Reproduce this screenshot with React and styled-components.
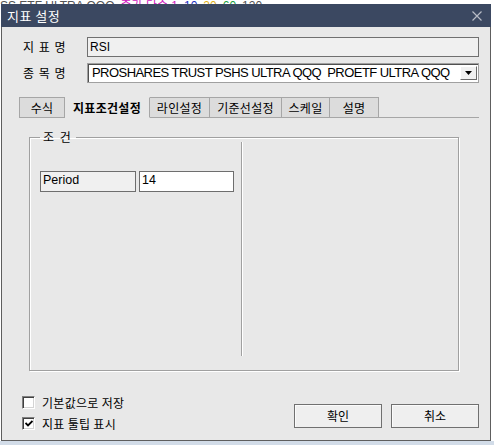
import React from 'react';
import styled, { createGlobalStyle } from 'styled-components';

const Global = createGlobalStyle`
  html, body {
    margin: 0;
    padding: 0;
    background: #ffffff;
    overflow: hidden;
  }
  body {
    font-family: "Noto Sans CJK KR", "Liberation Sans", sans-serif;
    font-size: 12px;
    color: #000;
  }
`

const Page = styled.div`
  width: 494px;
  height: 445px;
  display: flex;
  flex-direction: column;
  background: #fff;
`

const TopStrip = styled.div`
  height: 4px;
  overflow: hidden;
  white-space: nowrap;
  font-family: "Liberation Sans", "Noto Sans CJK KR", sans-serif;
  font-size: 12px;
  line-height: 12px;
  color: #555;
  span {
    display: inline-block;
    margin-top: -9px;
    margin-right: 6px;
  }
`

const Dialog = styled.div`
  margin-left: 1px;
  width: 490px;
  height: 437px;
  box-sizing: border-box;
  border: 1px solid #5e5e5e;
  border-top: none;
  background: #e8e8e8;
  display: flex;
  flex-direction: column;
`

const TitleBar = styled.div`
  height: 23px;
  background: #3b4861;
  display: flex;
  align-items: center;
  justify-content: space-between;
  padding: 0 9px 0 6px;
  margin: 0 -1px;
`

const Title = styled.div`
  color: #fff;
  font-size: 13px;
  line-height: 23px;
  letter-spacing: 0.5px;
`

const Body = styled.div`
  flex: 1;
  display: flex;
  flex-direction: column;
  padding: 10px 11px 0 0;
`

const FieldRow = styled.div`
  display: flex;
  align-items: center;
  height: 20px;
  margin-bottom: 6px;
`

const Label = styled.div`
  flex: none;
  width: 85px;
  box-sizing: border-box;
  padding-left: 21px;
  font-size: 12px;
  line-height: 20px;
  letter-spacing: 1px;
  white-space: nowrap;
`

const TextBox = styled.div`
  flex: 1;
  height: 20px;
  box-sizing: border-box;
  border: 1px solid #707070;
  background: ${p => (p.$white ? '#ffffff' : '#f0f0f0')};
  font-family: "Liberation Sans", sans-serif;
  font-size: 12px;
  line-height: 16px;
  padding-left: 2px;
  display: flex;
  align-items: center;
  justify-content: space-between;
  ${p => p.$white && `
    border-color: #a0a0a0;
    box-shadow: inset 1px 1px 0 #505050;
    padding-left: 4px;
    font-size: 13px;
    letter-spacing: -0.55px;
  `}
`

const ComboText = styled.span`
  white-space: nowrap;
  line-height: 18px;
`

const DropButton = styled.div`
  width: 17px;
  height: 14px;
  margin-right: 1px;
  box-sizing: border-box;
  background: #f0f0f0;
  border: 1px solid;
  border-color: #ffffff #696969 #696969 #ffffff;
  display: flex;
  align-items: center;
  justify-content: center;
`

const Tabs = styled.div`
  display: flex;
  margin: 8px 0 0 17px;
  height: 21px;
`

const Tab = styled.div`
  height: 21px;
  box-sizing: border-box;
  width: ${p => p.$w}px;
  text-align: center;
  font-size: 12px;
  line-height: 19px;
  letter-spacing: 0.3px;
  border: 1px solid #a6a6a6;
  border-left: ${p => (p.$first ? '1px solid #a6a6a6' : 'none')};
  background: ${p => (p.$active ? '#e8e8e8' : '#dcdcdc')};
  font-weight: ${p => (p.$active ? 700 : 400)};
  border-top-color: ${p => (p.$active ? '#e8e8e8' : '#a6a6a6')};
  border-bottom-color: ${p => (p.$active ? '#e8e8e8' : '#a6a6a6')};
  white-space: nowrap;
`

const TabLine = styled.div`
  flex: 1;
  border-bottom: 1px solid #a6a6a6;
`

const Group = styled.fieldset`
  margin: 12px 0 0 27px;
  width: 430px;
  height: 241px;
  box-sizing: border-box;
  border: 1px solid #a0a0a0;
  box-shadow: inset 1px 1px 0 #fff, 1px 1px 0 #fff;
  padding: 0;
  display: flex;
`

const Legend = styled.legend`
  margin-left: 10px;
  padding: 0 5px 0 3px;
  font-size: 12px;
  line-height: 14px;
  word-spacing: 3px;
`

const GroupInner = styled.div`
  flex: 1;
  display: flex;
  margin-top: -2px;
`

const LeftPane = styled.div`
  width: 211px;
  padding: 29px 0 0 10px;
  box-sizing: border-box;
`

const Divider = styled.div`
  width: 1px;
  height: 214px;
  background: #a0a0a0;
  box-shadow: 1px 0 0 #fff;
`

const ParamRow = styled.div`
  display: flex;
  gap: 3px;
`

const ParamCell = styled.div`
  width: ${p => p.$w}px;
  height: 21px;
  box-sizing: border-box;
  border: 1px solid #6e6e6e;
  background: ${p => (p.$value ? '#ffffff' : '#f0f0f0')};
  font-family: "Liberation Sans", sans-serif;
  font-size: 12.5px;
  line-height: 17px;
  padding-left: 2px;
`

const Footer = styled.div`
  flex: 1;
  display: flex;
  justify-content: space-between;
  align-items: flex-start;
  padding: 25px 0 0 20px;
`

const Checks = styled.div`
  display: flex;
  flex-direction: column;
  gap: 8px;
`

const CheckRow = styled.label`
  display: flex;
  align-items: center;
  gap: 7px;
  font-size: 12px;
  line-height: 13px;
  letter-spacing: 0.3px;
`

const Box = styled.span`
  width: 13px;
  height: 13px;
  box-sizing: border-box;
  background: #fff;
  border: 1px solid;
  border-color: #808080 #ffffff #ffffff #808080;
  box-shadow: inset 1px 1px 0 #404040, inset -1px -1px 0 #d4d4d4;
  display: flex;
  align-items: center;
  justify-content: center;
`

const Buttons = styled.div`
  display: flex;
  gap: 9px;
  margin-top: 8px;
`

const Button = styled.div`
  width: 88px;
  height: 24px;
  box-sizing: border-box;
  border: 1px solid #707070;
  background: #efefef;
  box-shadow: inset 1px 1px 0 #fbfbfb;
  text-align: center;
  font-size: 12px;
  line-height: 22px;
`

const BottomStrip = styled.div`
  height: 4px;
  background: #d2dce8;
`

const Close = () => (
  <svg width="10" height="10" viewBox="0 0 10 10">
    <path d="M0.5 0.5 L9.5 9.5 M9.5 0.5 L0.5 9.5" stroke="#b8bcc6" strokeWidth="1.2" />
  </svg>
)

const tabs = [
  { label: '수식', w: 46, first: true },
  { label: '지표조건설정', w: 85, active: true },
  { label: '라인설정', w: 60 },
  { label: '기준선설정', w: 72 },
  { label: '스케일', w: 48 },
  { label: '설명', w: 49 },
]

export default function App() {
  return (
    <Page>
      <Global />
      <TopStrip>
        <span>SS ETF ULTRA QQQ</span>
        <span style={{ color: '#d020c0' }}>종가 단순 1</span>
        <span style={{ color: '#2030c0' }}>10</span>
        <span style={{ color: '#e0b020' }}>20</span>
        <span style={{ color: '#20a040' }}>60</span>
        <span>120</span>
      </TopStrip>
      <Dialog>
        <TitleBar>
          <Title>지표 설정</Title>
          <Close />
        </TitleBar>
        <Body>
          <FieldRow>
            <Label>지 표 명</Label>
            <TextBox>RSI</TextBox>
          </FieldRow>
          <FieldRow>
            <Label>종 목 명</Label>
            <TextBox $white>
              <ComboText>PROSHARES TRUST PSHS ULTRA QQQ&nbsp; PROETF ULTRA QQQ</ComboText>
              <DropButton>
                <svg width="7" height="4" viewBox="0 0 7 4">
                  <path d="M0 0 H7 L3.5 4 Z" fill="#000" />
                </svg>
              </DropButton>
            </TextBox>
          </FieldRow>
          <Tabs>
            {tabs.map(t => (
              <Tab key={t.label} $w={t.w} $first={t.first} $active={t.active}>
                {t.label}
              </Tab>
            ))}
            <TabLine />
          </Tabs>
          <Group>
            <Legend>조 건</Legend>
            <GroupInner>
              <LeftPane>
                <ParamRow>
                  <ParamCell $w={96}>Period</ParamCell>
                  <ParamCell $w={95} $value>14</ParamCell>
                </ParamRow>
              </LeftPane>
              <Divider />
            </GroupInner>
          </Group>
          <Footer>
            <Checks>
              <CheckRow>
                <Box />
                기본값으로 저장
              </CheckRow>
              <CheckRow>
                <Box>
                  <svg width="8" height="7" viewBox="0 0 8 7">
                    <path d="M0.5 3 L3 5.5 L7.5 1" stroke="#000" strokeWidth="1.8" fill="none" />
                  </svg>
                </Box>
                지표 툴팁 표시
              </CheckRow>
            </Checks>
            <Buttons>
              <Button>확인</Button>
              <Button>취소</Button>
            </Buttons>
          </Footer>
        </Body>
      </Dialog>
      <BottomStrip />
    </Page>
  )
}
